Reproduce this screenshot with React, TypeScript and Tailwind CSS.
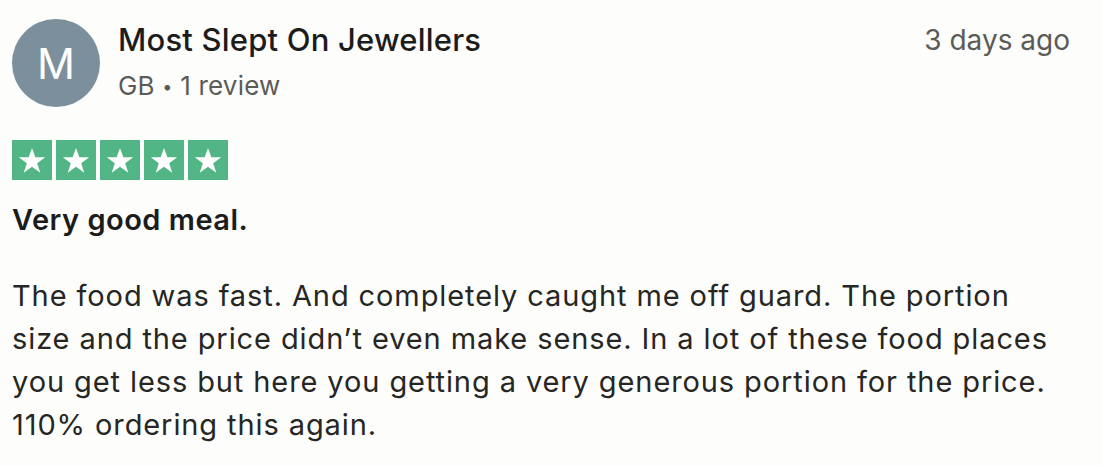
import React from "react";

function Star() {
  return (
    <div className="flex h-10 w-10 items-center justify-center bg-[#51b585]">
      <svg viewBox="0 0 24 24" className="h-8 w-8" fill="#ffffff">
        <path d="M12 3l2.5 7h7.4l-6 4.4 2.3 7.1L12 17.1l-6.2 4.4 2.3-7.1-6-4.4h7.4z" />
      </svg>
    </div>
  );
}

export default function App() {
  return (
    <div
      className="min-h-[466px] w-[1102px] bg-[#fdfdfb] px-3 pt-5 text-[#1c1c1c]"
      style={{ fontFamily: "Inter, 'Noto Sans', sans-serif" }}
    >
      <div className="flex items-start justify-between">
        <div className="flex items-start gap-[18px]">
          <div className="-mt-px flex h-[88px] w-[88px] items-center justify-center rounded-full bg-[#7b8f9c] text-[42px] text-white">
            M
          </div>
          <div>
            <div className="text-[31px] font-medium leading-[40px] tracking-[0.2px]">Most Slept On Jewellers</div>
            <div className="mt-[4px] text-[26px] leading-[44px] tracking-[0.2px] text-[#5b5b57]">
              GB <span className="text-[18px] align-[2px]">•</span> 1 review
            </div>
          </div>
        </div>
        <div className="pr-[20px] text-[28px] leading-[40px] text-[#5b5b57]">3 days ago</div>
      </div>

      <div className="mt-[31px] flex gap-1">
        <Star />
        <Star />
        <Star />
        <Star />
        <Star />
      </div>

      <div className="mt-[18px] text-[29px] font-semibold leading-[44px] tracking-[0.5px]">Very good meal.</div>

      <p className="mt-[32px] w-[1045px] text-[29px] leading-[43px] tracking-[0.9px] text-[#262624]">
        The food was fast. And completely caught me off guard. The portion size and the price didn’t even make sense. In a lot of these food places you get less but here you getting a very generous portion for the price. 110% ordering this again.
      </p>
    </div>
  );
}
